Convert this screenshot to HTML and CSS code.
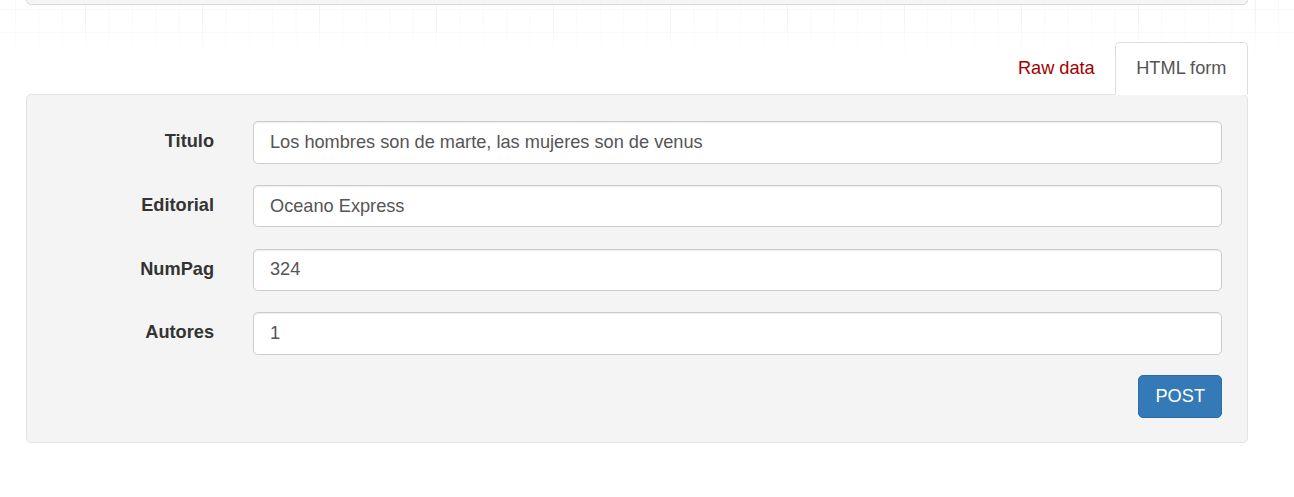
FILE: index.html
```html
<!DOCTYPE html>
<html lang="es">
<head>
<meta charset="utf-8">
<title>HTML form</title>
<link rel="stylesheet" href="styles.css">
</head>
<body>
<div class="page">
  <div class="container">
    <div class="response"></div>
    <ul class="tabs">
      <li class="tab">Raw data</li>
      <li class="tab active">HTML form</li>
    </ul>
    <div class="well">
      <form class="form">
        <label class="label" for="titulo">Titulo</label>
        <input class="input" id="titulo" type="text" value="Los hombres son de marte, las mujeres son de venus">
        <label class="label" for="editorial">Editorial</label>
        <input class="input" id="editorial" type="text" value="Oceano Express">
        <label class="label" for="numpag">NumPag</label>
        <input class="input" id="numpag" type="text" value="324">
        <label class="label" for="autores">Autores</label>
        <input class="input" id="autores" type="text" value="1">
        <div class="actions">
          <button class="btn" type="button">POST</button>
        </div>
      </form>
    </div>
  </div>
</div>
</body>
</html>
```

FILE: styles.css
```css
html, body {
  margin: 0;
  padding: 0;
}

body {
  font-family: "Liberation Sans", Arial, Helvetica, sans-serif;
  font-size: 18.2px;
  line-height: 25px;
  color: #333;
  background: #fff;
}

.page {
  min-height: 497px;
  overflow: hidden;
  background-image:
    linear-gradient(to bottom, rgba(255,255,255,0) 18px, #fff 56px),
    linear-gradient(to right, #f3f3f3 1px, transparent 1px),
    linear-gradient(to right, #f9f9f9 1px, transparent 1px),
    linear-gradient(to bottom, transparent 9px, #f9f9f9 9px, #f9f9f9 10px, transparent 10px, transparent 32px, #f7f7f7 32px, #f7f7f7 33px, transparent 33px);
  background-size: 100% 56px, 117px 56px, 23.4px 56px, 100% 56px;
  background-position: 0 0, 85px 0, 15px 0, 0 0;
  background-repeat: no-repeat, repeat-x, repeat-x, no-repeat;
}

.container {
  margin-left: 26px;
  width: 1222px;
}

.response {
  height: 120px;
  margin-top: -115px;
  box-sizing: border-box;
  background: #f5f5f7;
  border: 1px solid #d9d9d9;
  border-radius: 5px;
}

.tabs {
  display: flex;
  justify-content: flex-end;
  list-style: none;
  margin: 37px 0 -1px;
  padding: 0;
  position: relative;
  z-index: 1;
}

.tab {
  padding: 13px 20.5px;
  line-height: 25px;
  border: 1px solid transparent;
  border-radius: 5px 5px 0 0;
  color: #a30000;
}

.tab:first-child {
  padding-right: 19px;
}

.tab.active {
  background: #fff;
  border-color: #ddd;
  border-bottom-color: #fff;
  color: #555;
}

.well {
  background: #f4f4f4;
  border: 1px solid #e3e3e3;
  border-radius: 5px;
  padding: 26px 25px 24px 24px;
}

.form {
  display: grid;
  grid-template-columns: 163px 1fr;
  column-gap: 39px;
  row-gap: 21.25px;
  margin: 0;
}

.label {
  text-align: right;
  font-weight: bold;
  color: #333;
  padding-top: 8px;
  line-height: 25px;
}

.input {
  box-sizing: border-box;
  height: 42.5px;
  width: 100%;
  margin: 0;
  padding: 0 16px;
  font-family: inherit;
  font-size: 18.2px;
  color: #555;
  background: #fff;
  border: 1px solid #ccc;
  border-radius: 5px;
  box-shadow: inset 0 1px 1px rgba(0,0,0,0.075);
  outline: none;
}

.actions {
  grid-column: 1 / -1;
  display: flex;
  justify-content: flex-end;
  margin-top: -1px;
}

.btn {
  box-sizing: border-box;
  height: 43px;
  padding: 0 16px;
  font-family: inherit;
  font-size: 18.2px;
  color: #fff;
  background: #337ab7;
  border: 1px solid #2e6da4;
  border-radius: 5px;
  cursor: pointer;
}
```
